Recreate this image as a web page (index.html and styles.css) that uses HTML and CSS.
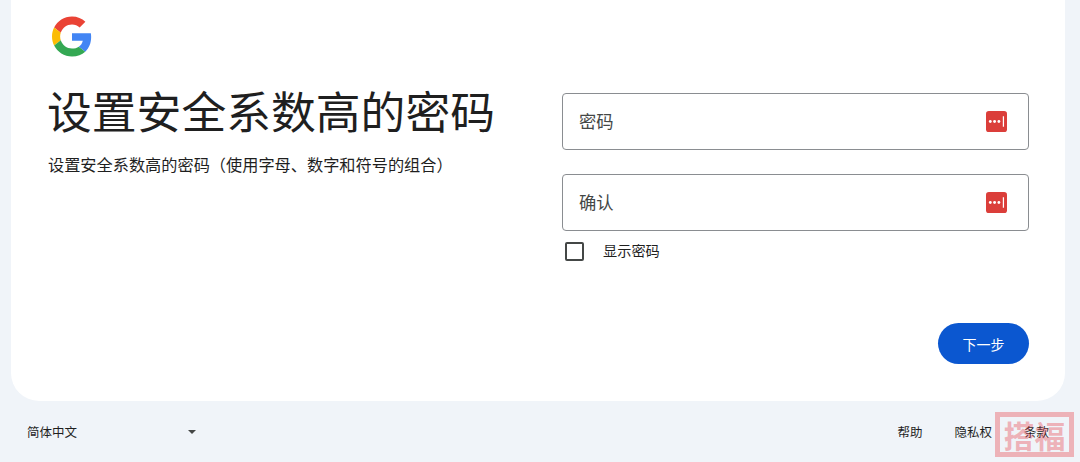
FILE: index.html
```html
<!DOCTYPE html>
<html lang="zh-CN">
<head>
<meta charset="utf-8">
<title>设置安全系数高的密码</title>
<link rel="stylesheet" href="styles.css">
</head>
<body>
<main class="card">
  <svg class="logo" viewBox="0 0 48 48" width="40" height="41">
    <path fill="#EA4335" d="M24 9.5c3.54 0 6.71 1.22 9.21 3.6l6.85-6.85C35.9 2.38 30.47 0 24 0 14.62 0 6.51 5.38 2.56 13.22l7.98 6.19C12.43 13.72 17.74 9.5 24 9.5z"/>
    <path fill="#4285F4" d="M46.98 24.55c0-1.57-.15-3.09-.38-4.55H24v9.02h12.94c-.58 2.96-2.26 5.48-4.78 7.18l7.73 6c4.51-4.18 7.09-10.36 7.09-17.65z"/>
    <path fill="#FBBC05" d="M10.53 28.59c-.48-1.45-.76-2.99-.76-4.59s.27-3.14.76-4.59l-7.98-6.19C.92 16.46 0 20.12 0 24c0 3.88.92 7.54 2.56 10.78l7.97-6.19z"/>
    <path fill="#34A853" d="M24 48c6.48 0 11.93-2.13 15.89-5.81l-7.73-6c-2.15 1.45-4.92 2.3-8.16 2.3-6.26 0-11.57-4.22-13.47-9.91l-7.98 6.19C6.51 42.62 14.62 48 24 48z"/>
  </svg>
  <div class="columns">
    <section class="intro">
      <h1 class="title">设置安全系数高的密码</h1>
      <p class="subtitle">设置安全系数高的密码（使用字母、数字和符号的组合）</p>
    </section>
    <section class="form">
      <div class="field">
        <span class="field-label">密码</span>
        <svg class="key" viewBox="0 0 22 22" width="21" height="21">
          <rect width="22" height="22" rx="3" fill="#db3e3a"/>
          <circle cx="4.5" cy="11" r="1.5" fill="#fff"/><circle cx="9" cy="11" r="1.5" fill="#fff"/><circle cx="13.5" cy="11" r="1.5" fill="#fff"/>
          <rect x="17.6" y="5.5" width="1.3" height="11" fill="#fff"/>
        </svg>
      </div>
      <div class="field field-second">
        <span class="field-label">确认</span>
        <svg class="key" viewBox="0 0 22 22" width="21" height="21">
          <rect width="22" height="22" rx="3" fill="#db3e3a"/>
          <circle cx="4.5" cy="11" r="1.5" fill="#fff"/><circle cx="9" cy="11" r="1.5" fill="#fff"/><circle cx="13.5" cy="11" r="1.5" fill="#fff"/>
          <rect x="17.6" y="5.5" width="1.3" height="11" fill="#fff"/>
        </svg>
      </div>
      <label class="show">
        <span class="checkbox"></span>
        <span class="show-label">显示密码</span>
      </label>
      <div class="actions"><button class="next" type="button">下一步</button></div>
    </section>
  </div>
</main>
<footer class="footer">
  <div class="lang"><span>简体中文</span><span class="caret"></span></div>
  <nav class="links"><a>帮助</a><a>隐私权</a><a>条款</a></nav>
</footer>
<div class="stamp">搭福</div>
</body>
</html>
```
FILE: styles.css
```css
* { box-sizing: border-box; }
html, body { height: 100%; }
body {
  margin: 0;
  height: 462px;
  overflow: hidden;
  background: #f0f4f9;
  font-family: "Noto Sans CJK SC", "Liberation Sans", sans-serif;
  color: #1f1f1f;
  position: relative;
}
.card {
  margin: 0 15px 0 11px;
  height: 401px;
  background: #fff;
  border-radius: 0 0 28px 28px;
  padding: 16px 36px 0 37px;
}
.logo { display: block; margin-left: 4px; }
.columns { display: flex; margin-top: 24px; }
.intro { width: 514px; }
.title {
  margin: -3px 0 3px -1px;
  font-size: 44.8px;
  font-weight: 400;
  line-height: 64px;
  color: #1f1f1f;
  white-space: nowrap;
}
.subtitle {
  margin: 10px 0 0;
  font-size: 16.2px;
  line-height: 24px;
  white-space: nowrap;
}
.form { width: 467px; padding-top: 12px; }
.field {
  height: 57px;
  border: 1px solid #8a8d91;
  border-radius: 4px;
  display: flex;
  align-items: center;
  justify-content: space-between;
  padding: 0 21px 0 16px;
}
.field-label { font-size: 17.3px; color: #444746; margin-top: -2px; }
.field-second { margin-top: 24px; }
.show {
  display: flex;
  align-items: center;
  margin-top: 10px;
  padding-left: 3px;
  height: 20px;
}
.checkbox {
  width: 19px;
  height: 19px;
  border: 2px solid #444746;
  border-radius: 2px;
}
.show-label { margin-left: 19px; font-size: 14.2px; color: #1f1f1f; margin-top: -2px; }
.actions { display: flex; justify-content: flex-end; margin-top: 62px; }
.next {
  width: 91px;
  height: 41px;
  border: 0;
  border-radius: 21px;
  background: #0b57d0;
  color: #fff;
  font-family: inherit;
  font-size: 14px;
}
.footer {
  display: flex;
  justify-content: space-between;
  align-items: center;
  height: 61px;
  padding: 0 31px 0 27px;
  font-size: 12.5px;
  color: #1f1f1f;
}
.lang { display: flex; align-items: center; width: 169px; justify-content: space-between; }
.caret {
  width: 0;
  height: 0;
  border-left: 4.5px solid transparent;
  border-right: 4.5px solid transparent;
  border-top: 4.5px solid #444746;
}
.links { display: flex; gap: 32px; }
.stamp {
  position: absolute;
  left: 995px;
  top: 412px;
  width: 79px;
  height: 45px;
  border: 5px solid rgba(232, 70, 80, 0.38);
  color: rgba(232, 70, 80, 0.38);
  font-size: 31px;
  font-weight: 700;
  line-height: 35px;
  text-align: center;
  white-space: nowrap;
  overflow: hidden;
  display: flex;
  justify-content: center;
}
```
